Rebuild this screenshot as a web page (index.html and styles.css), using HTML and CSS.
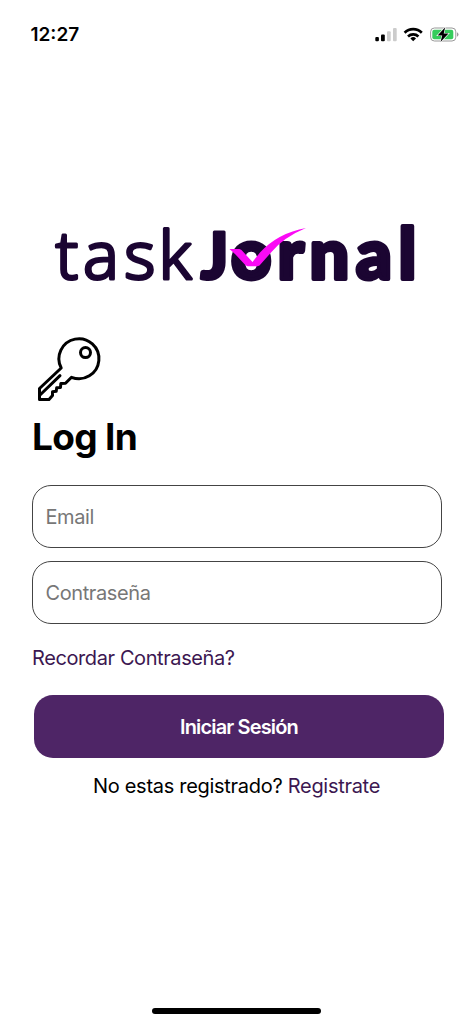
FILE: index.html
```html
<!DOCTYPE html>
<html lang="es">
<head>
<meta charset="utf-8">
<title>taskJornal</title>
<link rel="stylesheet" href="styles.css">
</head>
<body>
<div class="screen">
  <header class="status">
    <span class="time">12:27</span>
    <svg class="status-icons" viewBox="374 24 88 20" width="88" height="20" aria-hidden="true">
      <g>
        <rect x="375.300" y="37" width="3.600" height="4.200" rx="1"/>
        <rect x="381" y="34.500" width="3.800" height="6.700" rx="1"/>
        <rect x="387" y="31.300" width="3.700" height="9.900" rx="1" fill="#ccc"/>
        <rect x="393" y="28" width="3.700" height="13.200" rx="1" fill="#ccc"/>
      </g>
      <g fill="none" stroke="#000" stroke-width="2.700">
        <path d="M404.600 32.700a12.300 12.300 0 0 1 17.200 0"/>
        <path d="M408 36.400a7.600 7.600 0 0 1 10.400 0"/>
      </g>
      <path d="M413.200 41.300l-2.800-2.900a4.100 4.100 0 0 1 5.600 0z"/>
      <rect x="430.600" y="28" width="25.200" height="13" rx="3.800" fill="#fff" stroke="#999" stroke-width="1"/>
      <rect x="432.300" y="29.700" width="21" height="9.600" rx="2" fill="#35cc5b"/>
      <path d="M457 32.300v4.400q1.500-.7 1.500-2.200t-1.500-2.200z" fill="#999"/>
      <path d="M445.200 27.200l-7.600 8.200h4.600l-1.700 6.700 8-8.600h-4.800z" stroke="#fff" stroke-width="1.200" paint-order="stroke"/>
    </svg>
  </header>
  <main class="login">
    <svg class="logo" viewBox="50 200 372 108" width="372" height="108" role="img" aria-label="taskJornal">
      <text class="logo-light" y="279" x="55.500 83 124 158.500">task</text>
      <text class="logo-bold" y="278.500"><tspan class="logo-j" x="200.500">J</tspan><tspan x="231 277.500 309.500 356 398.500">ornal</tspan></text>
      <path d="M229.500 249H239.500L241.500 250L252.500 262L260 252.500Q278 233 306 228Q284 237 271.500 252L259.500 265.500L257.500 266.300H247.500L245.500 265.300L235.500 254.500Z" fill="#fb0af5"/>
    </svg>
    <svg class="key" viewBox="32 332 76 76" width="76" height="76" fill="none" stroke="#000" stroke-width="3" stroke-linejoin="round" stroke-linecap="round" aria-hidden="true">
      <path d="M61.200 368A20 20 0 1 1 71.500 377.300L65.500 383.200L60.800 383.600L60.500 387.500L56.700 387.800L56.200 391.200L52.500 391.700V395.500L49 399.500H39.500V388.500Z"/>
      <path d="M60 375.700L40 395"/>
      <circle cx="85.500" cy="352.600" r="5"/>
    </svg>
    <h1 class="title">Log In</h1>
    <form class="form">
      <input class="field" type="email" placeholder="Email" aria-label="Email">
      <input class="field" type="password" placeholder="Contraseña" aria-label="Contraseña">
      <a class="link forgot">Recordar Contraseña?</a>
      <button class="submit" type="button">Iniciar Sesión</button>
    </form>
    <p class="register">No estas registrado? <a class="link">Registrate</a></p>
  </main>
  <div class="home-bar"></div>
</div>
</body>
</html>
```
FILE: styles.css
```css
* { box-sizing: border-box; }
body {
  margin: 0;
  background: #fff;
  color: #000;
  font-family: Inter, "Liberation Sans", sans-serif;
}
.screen {
  display: flex;
  flex-direction: column;
  width: 473px;
  height: 1024px;
  overflow: hidden;
}
.status {
  display: flex;
  justify-content: space-between;
  align-items: flex-start;
  padding: 24px 11px 0 30.500px;
  height: 60px;
}
.time {
  font-size: 19px;
  line-height: 22px;
  font-weight: 600;
  letter-spacing: 0;
}
.login {
  flex: 1;
  display: flex;
  flex-direction: column;
  padding: 140px 32px 0;
}
.logo { margin-left: 18px; overflow: visible; }
.logo text {
  fill: #1b0532;
  stroke: #1b0532;
  stroke-linejoin: round;
}
.logo .logo-light {
  font: 300 67px "Noto Sans", "Open Sans", sans-serif;
  stroke-width: 3px;
}
.logo .logo-bold {
  font: 900 70px Lato, sans-serif;
  stroke-width: 4px;
}
.logo .logo-j {
  font: 900 65px Lato, sans-serif;
  stroke-width: 3px;
}
.key { margin-top: 24px; }
.title {
  margin: 6px 0 0;
  font-size: 37px;
  line-height: 46px;
  font-weight: 700;
  letter-spacing: -0.7px;
}
.form {
  display: flex;
  flex-direction: column;
  margin-top: 25px;
}
.field {
  width: 410px;
  height: 63px;
  margin: 0 0 13px -0.500px;
  padding: 1px 13px 0;
  border: 1.300px solid #444;
  border-radius: 19px;
  background: #fff;
  font: 400 20px Inter, sans-serif;
  letter-spacing: -0.4px;
}
.field::placeholder { color: #777; opacity: 1; }
.link { color: #3c1751; }
.forgot {
  margin-top: 8px;
  font-size: 20px;
  line-height: 26px;
  letter-spacing: -0.4px;
}
.submit {
  width: 410px;
  height: 63px;
  margin: 24px 0 0 2px;
  padding: 0;
  border: 0;
  border-radius: 19px;
  background: #4e2566;
  color: #fff;
  font: 600 20px Inter, sans-serif;
  letter-spacing: -0.85px;
}
.register {
  margin: 15px 0 0;
  text-align: center;
  font-size: 20px;
  line-height: 26px;
  letter-spacing: -0.29px;
}
.home-bar {
  width: 169px;
  height: 6px;
  margin: 0 0 10px 152px;
  border-radius: 3px;
  background: #000;
}
```
